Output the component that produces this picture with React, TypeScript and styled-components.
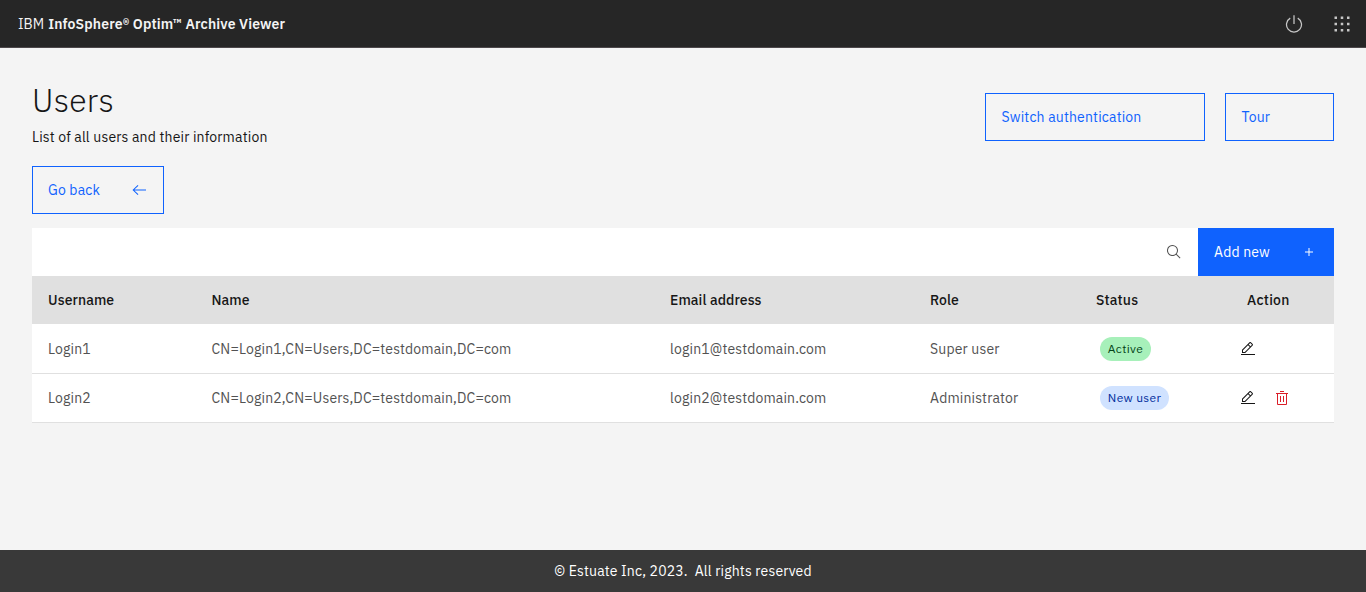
import React from "react";
import styled, { createGlobalStyle } from "styled-components";

const GlobalStyle = createGlobalStyle`
  * { box-sizing: border-box; }
  body {
    margin: 0;
    background: #f4f4f4;
    color: #161616;
    font-family: "IBM Plex Sans", Roboto, "Liberation Sans", sans-serif;
    font-size: 14px;
    line-height: 18px;
  }
`;

const Page = styled.div`
  display: flex;
  flex-direction: column;
  height: 100vh;
`;

const Header = styled.header`
  display: flex;
  align-items: center;
  height: 48px;
  padding: 0 14px 0 18px;
  background: #262626;
  border-bottom: 1px solid #4d484b;
  color: #f4f4f4;
  fill: #c6c6c6;
`;

const Text = styled.span<{ $spacing?: number }>`
  white-space: pre;
  letter-spacing: ${(p) => p.$spacing ?? 0}px;
`;

const Brand = styled.div`
  display: flex;
  flex: 1;
  gap: 4px;
  font-size: 14px;
  padding-top: 1px;
  strong { font-weight: 600; }
`;

const HeaderIcons = styled.div`
  display: flex;
  gap: 28px;
  padding-top: 1px;
`;

const Main = styled.main`
  flex: 1;
  padding: 35px 32px 0;
`;

const TitleRow = styled.div`
  display: flex;
  justify-content: space-between;
  align-items: flex-start;
  height: 83px;
`;

const Title = styled.h1`
  margin: 0;
  font-size: 32px;
  line-height: 34px;
  font-weight: 300;
`;

const Subtitle = styled.p`
  margin: 11px 0 0;
`;

const Actions = styled.div`
  display: flex;
  gap: 20px;
  padding-top: 10px;
`;

const Button = styled.button<{ $width: number; $primary?: boolean }>`
  display: flex;
  align-items: center;
  justify-content: space-between;
  width: ${(p) => p.$width}px;
  height: 48px;
  padding: 0 16px 0 15px;
  border: 1px solid #0f62fe;
  border-radius: 0;
  background: ${(p) => (p.$primary ? "#0f62fe" : "transparent")};
  color: ${(p) => (p.$primary ? "#ffffff" : "#0f62fe")};
  fill: currentColor;
  font: inherit;
  ${Actions} & { padding-left: 15.5px; }
`;

const Toolbar = styled.div`
  display: flex;
  margin-top: 14px;
  height: 48px;
  background: #ffffff;
`;

const SearchBox = styled.div`
  display: flex;
  flex: 1;
  align-items: center;
  justify-content: flex-end;
  padding-right: 16px;
  fill: #525252;
`;

const Row = styled.div`
  display: grid;
  grid-template-columns: 163.5px 458.5px 260px 166px 144px 1fr;
  align-items: center;
  height: 49px;
  padding-left: 16px;
  background: #ffffff;
  border-bottom: 1px solid #e0e0e0;
  color: #525252;
  &:nth-child(2) { height: 50px; }
`;

const HeadRow = styled(Row)`
  height: 48px;
  background: #e0e0e0;
  color: #161616;
  font-weight: 500;
  border-bottom: 0;
  & > :last-child { padding-left: 7px; }
`;

const Tag = styled.span<{ $bg: string; $fg: string; $width: number }>`
  display: flex;
  align-items: center;
  justify-content: center;
  width: ${(p) => p.$width}px;
  height: 24px;
  margin-left: 4px;
  border-radius: 12px;
  background: ${(p) => p.$bg};
  color: ${(p) => p.$fg};
  font-size: 12px;
`;

const RowActions = styled.div`
  display: flex;
  gap: 18px;
  fill: #161616;
`;

const Footer = styled.footer`
  display: flex;
  align-items: center;
  justify-content: center;
  height: 42px;
  background: #393939;
  color: #ffffff;
`;

const paths = {
  power: "M22.5 5.74l-1 1.73a11 11 0 1 1-11 0l-1-1.73a13 13 0 1 0 13 0zM15 2h2v14h-2z",
  grid: "M14 4h4v4h-4zM4 4h4v4H4zM24 4h4v4h-4zM14 14h4v4h-4zM4 14h4v4H4zM24 14h4v4h-4zM14 24h4v4h-4zM4 24h4v4H4zM24 24h4v4h-4z",
  back: "M13.4 26L14.8 24.6 6.8 17H30V15H6.8L14.8 7.4 13.4 6 3 16z",
  search: "M29 27.586l-7.552-7.552a11.018 11.018 0 1 0-1.414 1.414L27.586 29zM4 13a9 9 0 1 1 9 9 9.01 9.01 0 0 1-9-9z",
  add: "M17 15V8h-2v7H8v2h7v7h2v-7h7v-2z",
  edit: "M2 26h28v2H2zM25.4 9c.8-.8.8-2 0-2.8l-3.6-3.6c-.8-.8-2-.8-2.8 0l-15 15V24h6.4L25.4 9zM20.4 4L24 7.6l-3 3L17.4 7l3-3zM6 22v-3.6l10-10 3.6 3.6-10 10H6z",
  trash: "M12 12h2v12h-2zM18 12h2v12h-2zM4 6v2h2v20a2 2 0 0 0 2 2h16a2 2 0 0 0 2-2V8h2V6zM8 28V8h16v20zM12 2h8v2h-8z",
};

function Icon({ name, size = 16, color }: { name: keyof typeof paths; size?: number; color?: string }) {
  return (
    <svg width={size} height={size} viewBox="0 0 32 32" fill={color} aria-hidden="true">
      <path d={paths[name]} />
    </svg>
  );
}

const columns: [string, number][] = [
  ["Username", 0.08], ["Name", 0.08], ["Email address", 0.09],
  ["Role", 0.1], ["Status", 0.16], ["Action", 0.22],
];

const users = [
  { login: "Login1", cn: "CN=Login1,CN=Users,DC=testdomain,DC=com", email: "login1@testdomain.com", role: "Super user", status: "Active", bg: "#a7f0ba", fg: "#044317", width: 51, removable: false },
  { login: "Login2", cn: "CN=Login2,CN=Users,DC=testdomain,DC=com", email: "login2@testdomain.com", role: "Administrator", status: "New user", bg: "#d0e2ff", fg: "#002d9c", width: 69, removable: true },
];

export default function App() {
  return (
    <Page>
      <GlobalStyle />
      <Header>
        <Brand>
          <Text>IBM</Text>
          <Text as="strong" $spacing={0.15}>InfoSphere® Optim™ Archive Viewer</Text>
        </Brand>
        <HeaderIcons>
          <Icon name="power" size={20} />
          <Icon name="grid" size={20} />
        </HeaderIcons>
      </Header>
      <Main>
        <TitleRow>
          <div>
            <Title><Text $spacing={0.25}>Users</Text></Title>
            <Subtitle><Text $spacing={0.16}>List of all users and their information</Text></Subtitle>
          </div>
          <Actions>
            <Button $width={220}><Text $spacing={0.16}>Switch authentication</Text></Button>
            <Button $width={109}><Text $spacing={0.16}>Tour</Text></Button>
          </Actions>
        </TitleRow>
        <Button $width={132}><Text $spacing={0.16}>Go back</Text><Icon name="back" /></Button>
        <Toolbar>
          <SearchBox><Icon name="search" /></SearchBox>
          <Button $width={136} $primary><Text $spacing={0.16}>Add new</Text><Icon name="add" /></Button>
        </Toolbar>
        <div>
          <HeadRow>
            {columns.map(([label, spacing]) => <Text key={label} $spacing={spacing}>{label}</Text>)}
          </HeadRow>
          {users.map((u) => (
            <Row key={u.login}>
              <Text $spacing={0.16}>{u.login}</Text>
              <Text $spacing={0.15}>{u.cn}</Text>
              <Text $spacing={0.15}>{u.email}</Text>
              <Text $spacing={0.16}>{u.role}</Text>
              <Tag $bg={u.bg} $fg={u.fg} $width={u.width}><Text $spacing={0.32}>{u.status}</Text></Tag>
              <RowActions>
                <Icon name="edit" />
                {u.removable && <Icon name="trash" color="#da1e28" />}
              </RowActions>
            </Row>
          ))}
        </div>
      </Main>
      <Footer><Text $spacing={0.16}>© Estuate Inc, 2023.  All rights reserved</Text></Footer>
    </Page>
  );
}
